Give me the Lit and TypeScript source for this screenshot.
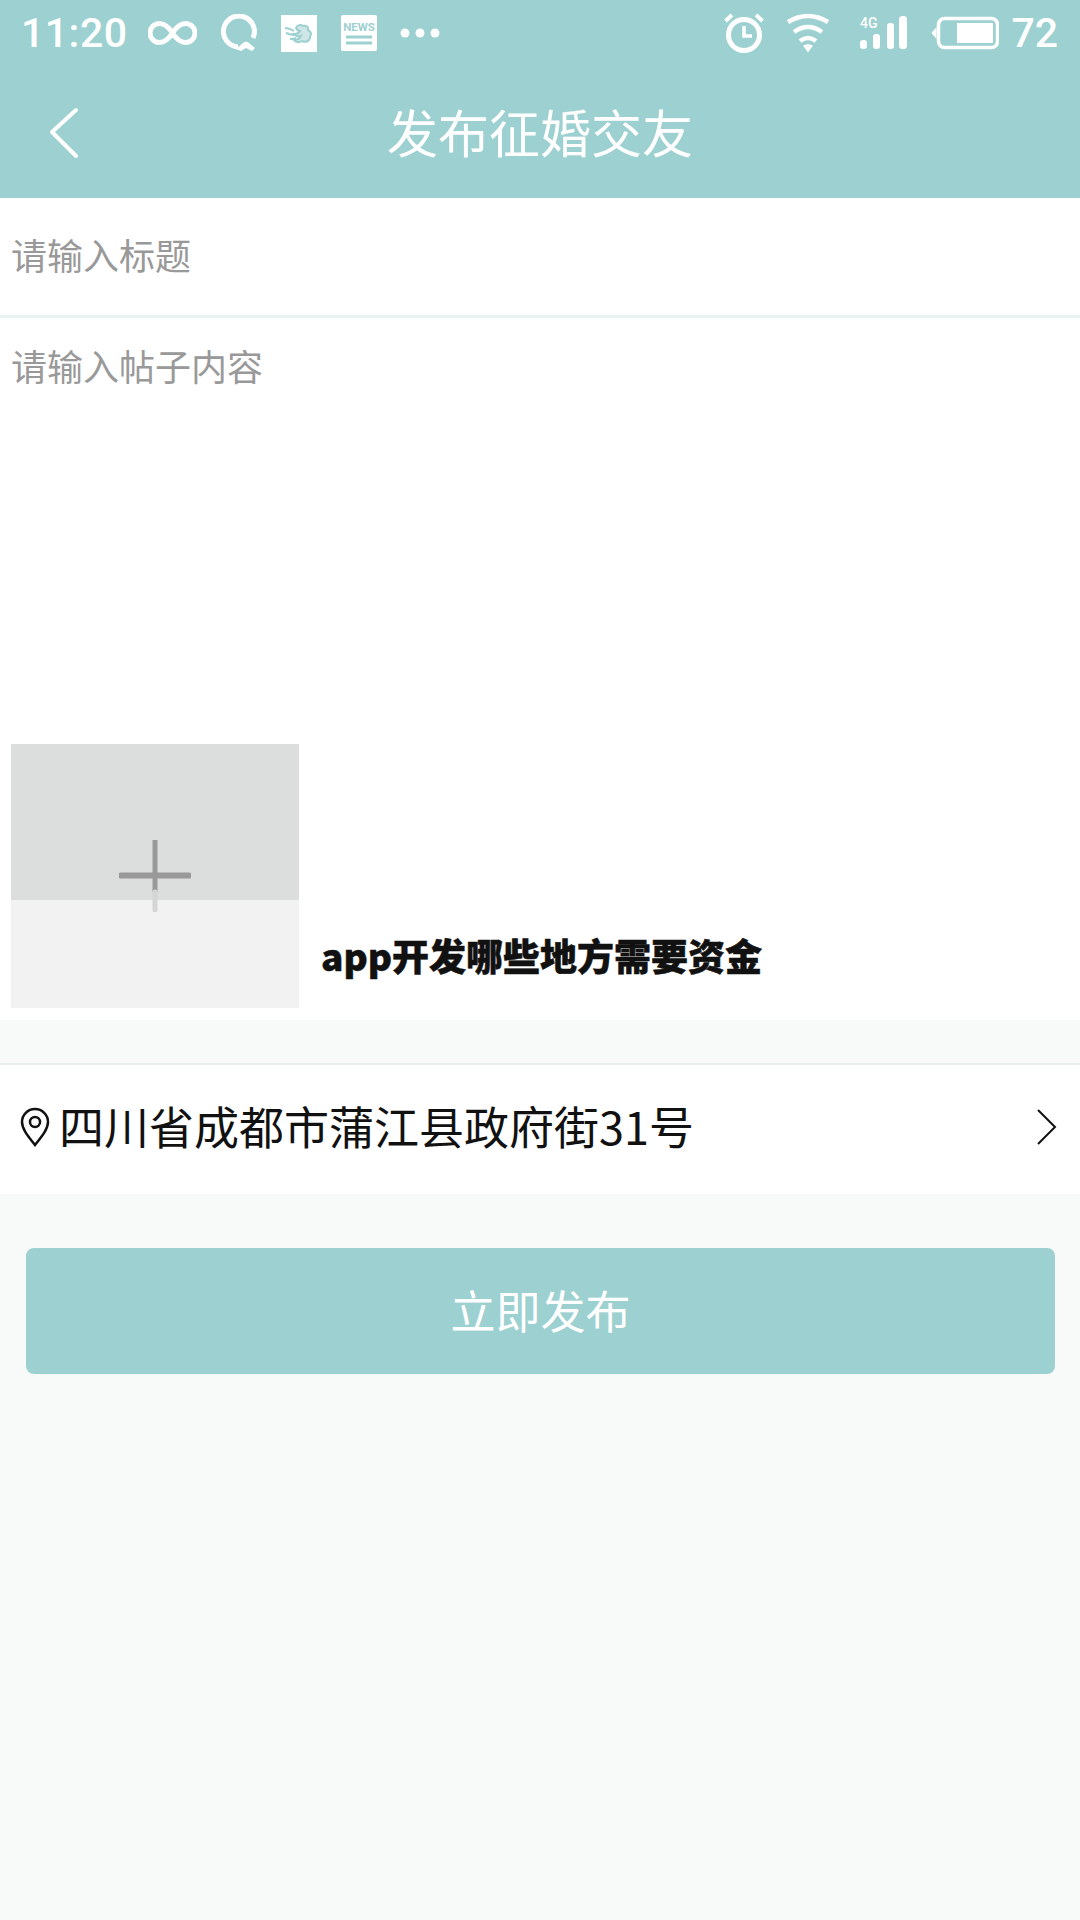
import { LitElement, html, css } from "lit";
import { customElement } from "lit/decorators.js";

const CJK = `"Noto Sans CJK SC", "Noto Sans", sans-serif`;

@customElement("app-root")
export class AppRoot extends LitElement {
  static styles = css`
    :host { display: block; width: 1080px; height: 1920px; background: #f8fafa; font-family: ${css([CJK] as any)}; overflow: hidden; }
    .top { background: #9dd0d0; height: 198px; display: flex; flex-direction: column; color: #fff; }
    .status { height: 66px; display: flex; align-items: center; padding: 0 22px 0 21px; font-family: Roboto, sans-serif; font-size: 41px; font-weight: 500; }
    .status svg { display: block; flex: none; }
    .time { width: 127px; flex: none; letter-spacing: 0.5px; }
    .spacer { flex: 1; }
    .ml23 { margin-left: 23px; }
    .ml24 { margin-left: 24px; }
    .ml22 { margin-left: 22px; }
    .ml30 { margin-left: 30px; }
    .ml12 { margin-left: 12px; }
    .nav { flex: 1; position: relative; display: flex; align-items: center; justify-content: center; padding-bottom: 2px; }
    .nav h1 { margin: 0; font-size: 51px; font-weight: 400; line-height: 70px; }
    .back { position: absolute; left: 48px; top: 38px; }
    .title { background: #fff; height: 117px; display: flex; align-items: flex-start; padding-left: 11px; color: #999; font-size: 36px; line-height: 50px; border-bottom: 3px solid #e8f2f2; }
    .title span { margin-top: 31px; }
    .body { background: #fff; height: 702px; padding: 0 11px; display: flex; flex-direction: column; justify-content: space-between; }
    .ph { color: #999; font-size: 36px; line-height: 50px; margin-top: 22px; }
    .media { display: flex; align-items: flex-end; gap: 22px; padding-bottom: 12px; }
    .add { width: 288px; height: 264px; position: relative; background: linear-gradient(#dcdddd 0 156px, #f2f2f2 156px); }
    .add svg { position: absolute; left: 108px; top: 96px; }
    .caption { font-size: 37px; font-weight: 900; color: #111; line-height: 50px; margin-bottom: 28px; -webkit-text-stroke: 0.5px #111; }
    .gap { height: 43px; border-bottom: 2px solid #e6eeee; }
    .addr { background: #fff; height: 129px; display: flex; align-items: center; padding: 0 22px 0 20px; font-size: 45px; color: #111; }
    .addr span { flex: 1; margin-left: 9px; line-height: 60px; padding-bottom: 7px; }
    .chev { margin-bottom: 6px; }
    .pin { margin-bottom: 6px; }
    .btn { margin: 54px 25px 0 26px; height: 126px; background: #9dd0d0; border-radius: 8px; color: #fff; font-size: 45px; line-height: 60px; display: flex; align-items: center; justify-content: center; padding-bottom: 3px; box-sizing: border-box; }
  `;

  render() {
    return html`
      <div class="top">
        <div class="status">
          <span class="time">11:20</span>
          <svg width="49" height="26" viewBox="0 0 49 26" fill="none" stroke="#fff" stroke-width="5"><path d="M24.500 13C20 6 16 3.500 11.500 3.500a9.500 9.500 0 0 0 0 19c4.500 0 8.500-2.500 13-9.500s8.500-9.500 13-9.500a9.500 9.500 0 0 1 0 19c-4.500 0-8.500-2.500-13-9.500z"/></svg>
          <svg class="ml24" width="36" height="38" viewBox="0 0 36 38" fill="none"><path d="M17 33A15.500 15.500 0 1 1 32 24" stroke="#fff" stroke-width="5"/><path d="M15 35l7-6c2-2 4-2 6 0l6 5-3 3-6-3-5 3z" fill="#fff"/></svg>
          <svg class="ml24" width="36" height="37" viewBox="0 0 36 37"><rect width="36" height="37" fill="#fff"/><path d="M15 13c1-3 5-4 7-2 3-1 6 1 5 4 3 1 4 5 2 7 0 4-4 6-8 4-3 2-6 1-8-1 3 0 6-2 7-4-2 1-5 0-7-2 3 0 5-1 6-3-2 0-3-1-4-3z" fill="#cfe6e6" stroke="#9dd0d0" stroke-width="2"/><path d="M4 13c3 0 6 1 9 3M5 18c3 1 6 2 9 2M9 24c2 0 4 0 6-1" stroke="#9dd0d0" stroke-width="2" fill="none"/></svg>
          <svg class="ml24" width="36" height="36" viewBox="0 0 36 36"><rect width="36" height="36" rx="2" fill="#fff"/><text x="18" y="16" text-anchor="middle" font-family="Roboto, sans-serif" font-size="11.500" font-weight="700" fill="#9dd0d0">NEWS</text><path d="M5 22h26M5 28h26" stroke="#9dd0d0" stroke-width="3"/></svg>
          <svg class="ml23" width="40" height="12" viewBox="0 0 40 12" fill="#fff"><circle cx="5" cy="6" r="4.500"/><circle cx="20" cy="6" r="4.500"/><circle cx="35" cy="6" r="4.500"/></svg>
          <span class="spacer"></span>
          <svg width="40" height="42" viewBox="0 0 40 42" fill="none" stroke="#fff"><circle cx="20" cy="23" r="15.500" stroke-width="5"/><path d="M20 14v10h8" stroke-width="3.500"/><path d="M1.500 9L8 3M38.500 9L32 3" stroke-width="4"/></svg>
          <svg class="ml22" width="44" height="40" viewBox="0 0 44 40" fill="none" stroke="#fff" stroke-width="4.500"><path d="M2 9Q22 -3 42 9M8 19Q22 9 36 19M14 28Q22 22 30 28"/><path d="M17 32.500l5-1.500 5 1.500-5 7z" fill="#fff" stroke="none"/></svg>
          <svg class="ml30" width="47" height="38" viewBox="0 0 47 38"><text x="0" y="14" font-family="Roboto, sans-serif" font-size="14" font-weight="500" fill="#fff">4G</text><rect x="0" y="26" width="7" height="9" rx="3" fill="#fff"/><rect x="13" y="20" width="7" height="15" rx="3" fill="#fff"/><rect x="27" y="9" width="7" height="26" rx="3" fill="#fff"/><rect x="39" y="2" width="8" height="33" rx="3.500" fill="#fff"/></svg>
          <svg class="ml24" width="68" height="36" viewBox="0 0 68 36" fill="none"><rect x="7.500" y="3.500" width="59" height="29" rx="6" stroke="#fff" stroke-width="3.500"/><rect x="26" y="8" width="36" height="20" fill="#fff"/><path d="M0.500 18l5-6v12z" fill="#fff"/></svg>
          <span class="ml12">72</span>
        </div>
        <div class="nav">
          <svg class="back" width="34" height="56" viewBox="0 0 34 56" fill="none" stroke="#fff" stroke-width="4" stroke-linecap="round" stroke-linejoin="round"><path d="M28 6L4 28l24 24"/></svg>
          <h1>发布征婚交友</h1>
        </div>
      </div>
      <div class="title"><span>请输入标题</span></div>
      <div class="body">
        <div class="ph">请输入帖子内容</div>
        <div class="media">
          <div class="add">
            <svg width="72" height="72" viewBox="0 0 72 72"><path d="M36 0v52" stroke="#999" stroke-width="5"/><path d="M36 52v18" stroke="#d5d5d5" stroke-width="5" stroke-linecap="round"/><path d="M2 35.500h68" stroke="#999" stroke-width="6" stroke-linecap="round"/></svg>
          </div>
          <div class="caption">app开发哪些地方需要资金</div>
        </div>
      </div>
      <div class="gap"></div>
      <div class="addr">
        <svg class="pin" width="30" height="40" viewBox="0 0 30 40" fill="none" stroke="#111" stroke-width="2.500"><path d="M15 38C8 29 2 22 2 15a13 13 0 0 1 26 0c0 7-6 14-13 23z"/><circle cx="15" cy="15" r="5"/></svg>
        <span>四川省成都市蒲江县政府街31号</span>
        <svg class="chev" width="22" height="38" viewBox="0 0 22 38" fill="none" stroke="#111" stroke-width="2"><path d="M2 2l17 17L2 36"/></svg>
      </div>
      <div class="btn">立即发布</div>
    `;
  }
}
